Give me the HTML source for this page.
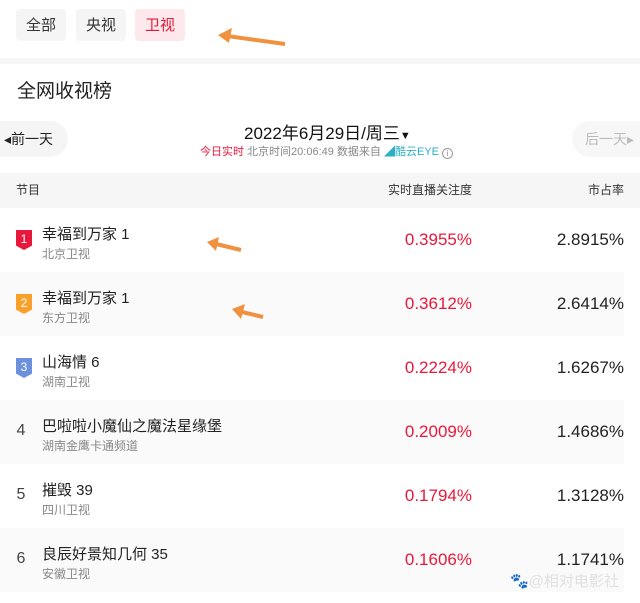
<!DOCTYPE html><html><head><meta charset="utf-8"><style>
*{margin:0;padding:0;box-sizing:border-box}
body{width:640px;height:603px;background:#fff;font-family:"Liberation Sans","Noto Sans CJK SC",sans-serif;position:relative;overflow:hidden;color:#222}
.a{position:absolute}
.tab{position:absolute;top:9px;height:32px;width:50px;border-radius:4px;background:#f5f5f5;font-size:15px;line-height:33px;text-align:center;color:#333}
.row{position:absolute;left:0;width:624px;height:64px}
.g{background:#fafafa}
.badge{position:absolute;left:16px;width:16px;height:20px;color:#fff;font-size:12px;text-align:center;line-height:18px;clip-path:polygon(0 0,100% 0,100% 78%,50% 100%,0 78%)}
.t{position:absolute;left:42px;font-size:15px;color:#222}
.s{position:absolute;left:42px;font-size:12px;color:#888}
.n{position:absolute;left:5px;width:32px;text-align:center;font-size:16px;color:#444}
.p{position:absolute;right:152px;font-size:17px;color:#e8183c}
.m{position:absolute;right:0;font-size:17px;color:#222}
</style></head><body>
<div class="tab" style="left:16px">全部</div>
<div class="tab" style="left:76px">央视</div>
<div class="tab" style="left:135px;background:#fde8ec;color:#e8183c">卫视</div>
<svg class="a" style="left:215px;top:27px" width="75" height="22"><path d="M70 17 L12 9" stroke="#f0913f" stroke-width="4"/><path d="M3 8 L17 1 L14 16Z" fill="#f0913f"/></svg>
<div class="a" style="left:0;top:58px;width:640px;height:6px;background:#f6f6f6"></div>
<div class="a" style="left:17px;top:76px;font-size:19px;color:#222">全网收视榜</div>
<div class="a" style="left:0;top:121px;width:68px;height:36px;border-radius:0 18px 18px 0;background:#f5f5f5;font-size:14px;line-height:36px;color:#222;padding-left:4px">◂前一天</div>
<div class="a" style="left:572px;top:121px;width:68px;height:36px;border-radius:18px 0 0 18px;background:#f7f7f7;font-size:14px;line-height:36px;color:#bbb;padding-left:13px">后一天▸</div>
<div class="a" style="left:244px;top:119px;font-size:17px;color:#111">2022年6月29日/周三<span style="font-size:11px">▼</span></div>
<div class="a" style="left:200px;top:143px;font-size:11px;color:#888;white-space:nowrap"><span style="color:#e8183c">今日实时</span> 北京时间20:06:49 数据来自 <span style="color:#2ab0c5">◢酷云EYE</span> <span style="display:inline-block;width:11px;height:11px;border:1px solid #999;border-radius:50%;font-size:8px;line-height:9px;text-align:center;vertical-align:-1px">i</span></div>
<div class="a" style="left:0;top:173px;width:640px;height:35px;background:#f6f6f6;font-size:12px;color:#333;line-height:35px"><span class="a" style="left:16px">节目</span><span class="a" style="right:168px">实时直播关注度</span><span class="a" style="right:16px">市占率</span></div>

<div class="row" style="top:208px"><div class="badge" style="top:22px;background:#e8183c">1</div><div class="t" style="top:15px">幸福到万家 1</div><div class="s" style="top:37px">北京卫视</div><div class="p" style="top:22px">0.3955%</div><div class="m" style="top:22px">2.8915%</div></div>
<div class="row g" style="top:272px"><div class="badge" style="top:22px;background:#f8a02a">2</div><div class="t" style="top:15px">幸福到万家 1</div><div class="s" style="top:37px">东方卫视</div><div class="p" style="top:22px">0.3612%</div><div class="m" style="top:22px">2.6414%</div></div>
<div class="row" style="top:336px"><div class="badge" style="top:22px;background:#6b90dc">3</div><div class="t" style="top:15px">山海情 6</div><div class="s" style="top:37px">湖南卫视</div><div class="p" style="top:22px">0.2224%</div><div class="m" style="top:22px">1.6267%</div></div>
<div class="row g" style="top:400px"><div class="n" style="top:22px">4</div><div class="t" style="top:15px">巴啦啦小魔仙之魔法星缘堡</div><div class="s" style="top:37px">湖南金鹰卡通频道</div><div class="p" style="top:22px">0.2009%</div><div class="m" style="top:22px">1.4686%</div></div>
<div class="row" style="top:464px"><div class="n" style="top:22px">5</div><div class="t" style="top:15px">摧毁 39</div><div class="s" style="top:37px">四川卫视</div><div class="p" style="top:22px">0.1794%</div><div class="m" style="top:22px">1.3128%</div></div>
<div class="row g" style="top:528px"><div class="n" style="top:22px">6</div><div class="t" style="top:15px">良辰好景知几何 35</div><div class="s" style="top:37px">安徽卫视</div><div class="p" style="top:22px">0.1606%</div><div class="m" style="top:22px">1.1741%</div></div>

<svg class="a" style="left:204px;top:236px" width="40" height="20"><path d="M37 14 L12 8" stroke="#f0913f" stroke-width="4"/><path d="M3 6 L15 1 L12 15Z" fill="#f0913f"/></svg>
<svg class="a" style="left:230px;top:303px" width="36" height="20"><path d="M33 14 L12 9" stroke="#f0913f" stroke-width="4"/><path d="M2 6 L15 1 L11 16Z" fill="#f0913f"/></svg>
<div class="a" style="left:510px;top:570px;font-size:15px;color:#e0e0e0">🐾@相对电影社</div>
</body></html>
